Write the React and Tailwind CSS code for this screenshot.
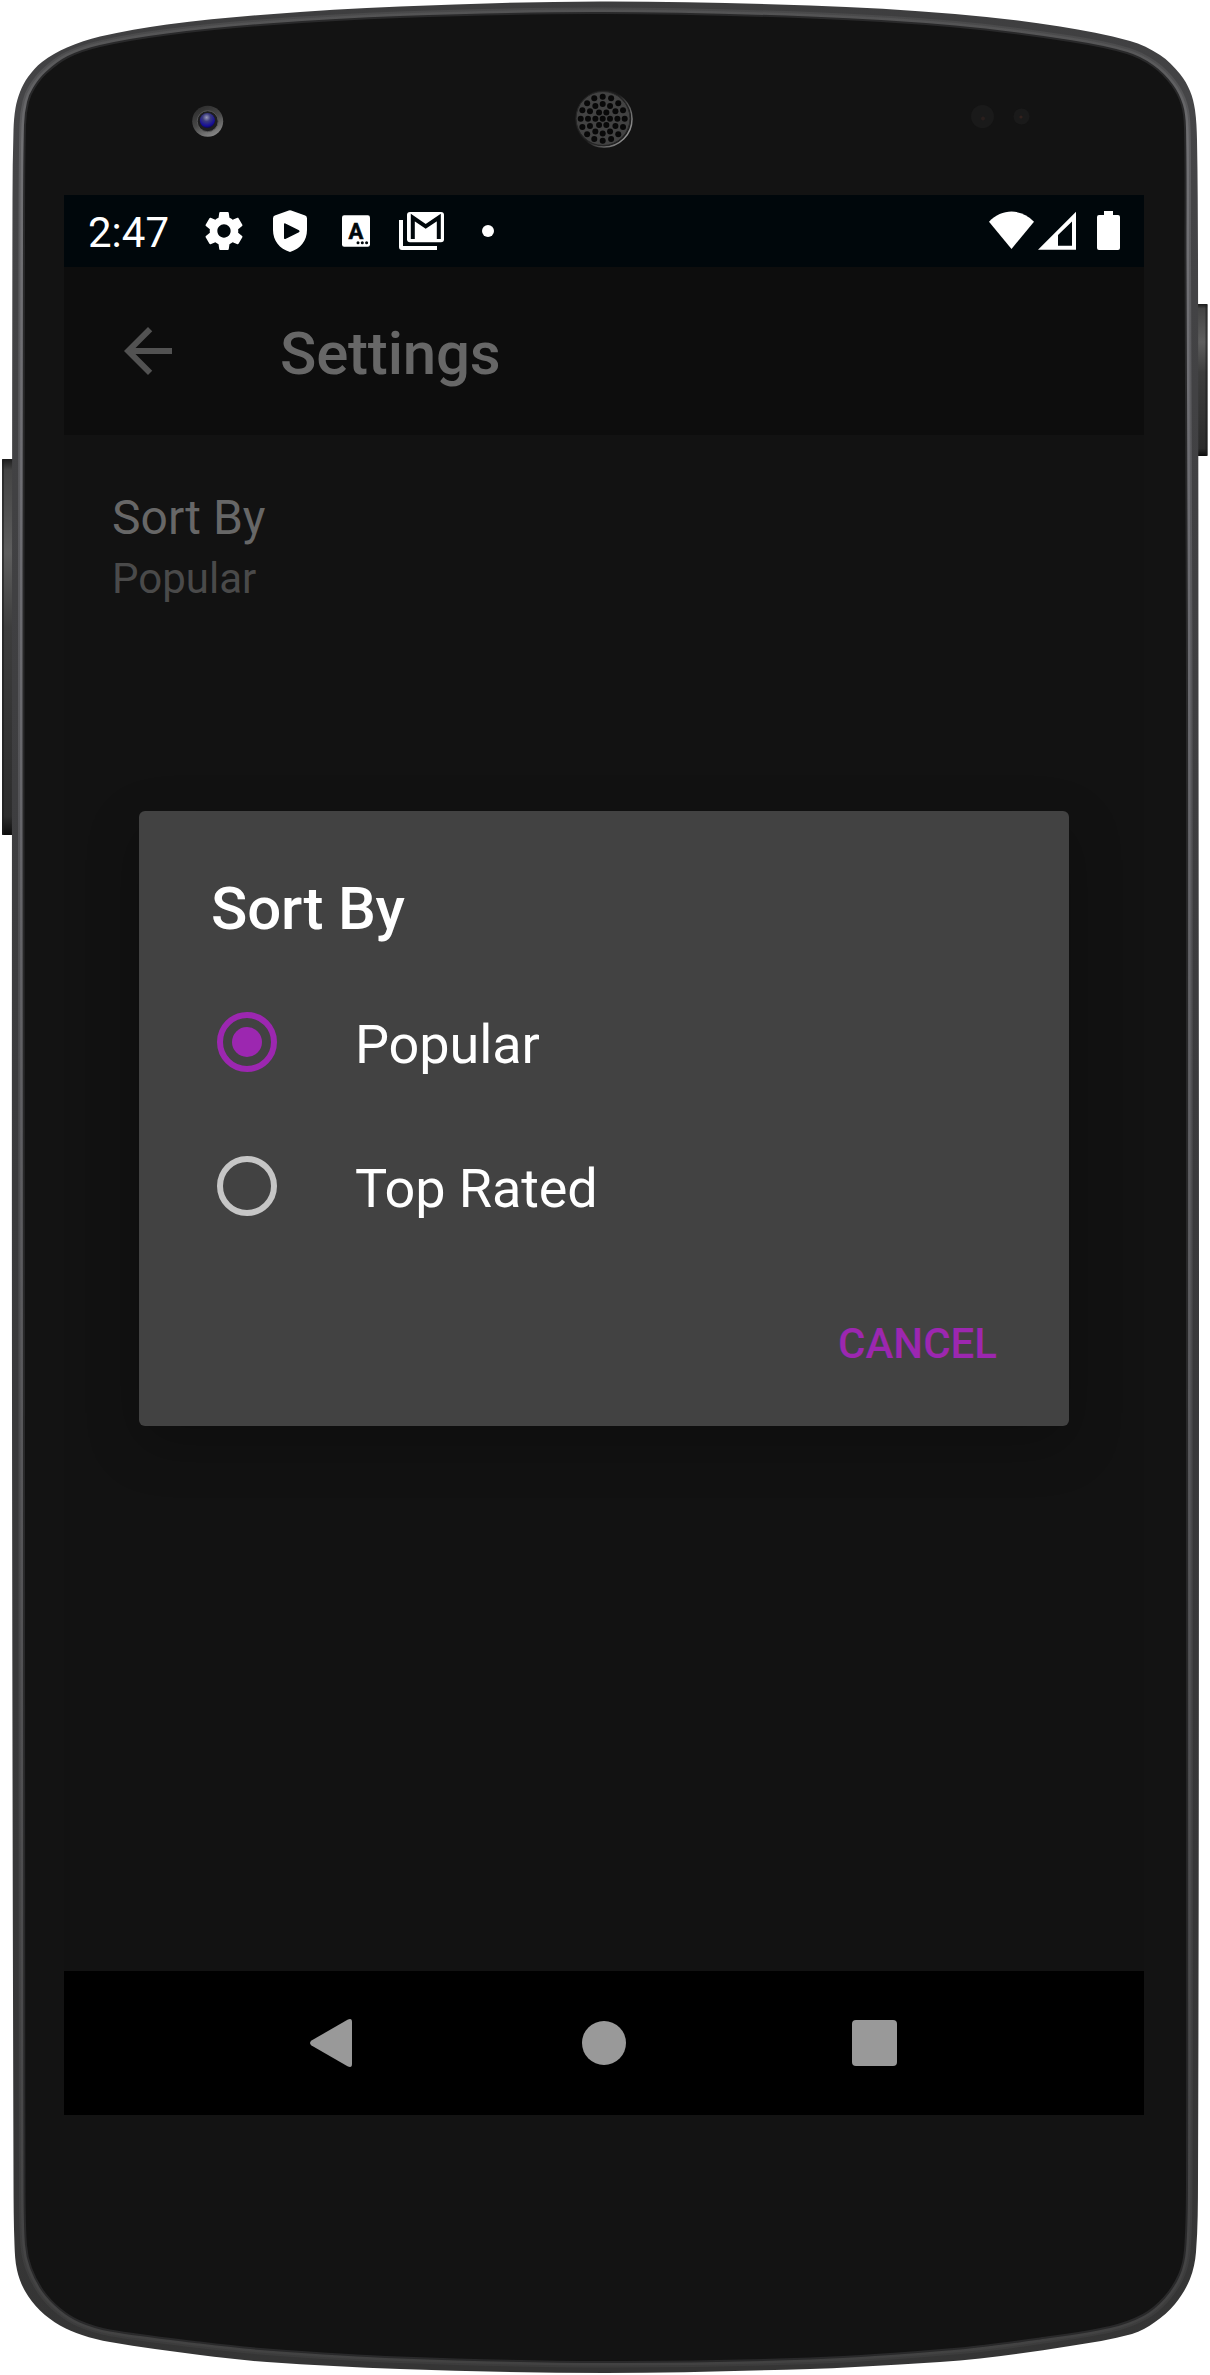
import React from "react";

const OUTER = [
  [600, 1.5], [810, 5.5], [955, 14], [1060, 26.5], [1130, 41], [1160, 55], [1180, 74], [1190, 91], [1195, 110], [1197, 140],
  [1198, 260], [1198.5, 700], [1199, 1400], [1198, 2180], [1196, 2252], [1190, 2279], [1175, 2304], [1155, 2322], [1132, 2334],
  [1070, 2346], [980, 2358.5], [900, 2364.5], [810, 2369], [605, 2373], [400, 2369], [267, 2362], [200, 2355], [110, 2342],
  [82, 2335], [60, 2325.5], [40, 2310.5], [25, 2291], [17, 2270], [14.5, 2245], [13.5, 2180], [12, 1400], [12, 700], [12.5, 200],
  [13.5, 130], [15.5, 108], [20, 92], [28, 77], [42, 62], [67, 47.5], [100, 36.5], [167, 24.5], [267, 14.5], [400, 6.5],
];

const INNER = [
  [600, 13], [810, 17.5], [955, 26.5], [1070, 41], [1127, 53], [1153, 66], [1172, 85], [1182, 105], [1185, 128], [1185.5, 260],
  [1187, 700], [1187, 1400], [1187, 2180], [1185, 2250], [1179, 2275], [1164, 2298], [1143, 2315], [1110, 2327], [1040, 2338.5],
  [960, 2348.5], [810, 2358.5], [605, 2362], [400, 2357.5], [267, 2349.5], [200, 2342.5], [110, 2330.5], [80, 2321.5],
  [60, 2309], [43, 2291], [31, 2268], [26, 2245], [24.5, 2180], [24, 1400], [23.5, 700], [24, 250], [25, 125], [28, 102],
  [34, 88], [46, 73], [68, 57], [100, 46], [167, 34.5], [267, 24.5], [400, 17],
];

// Closed Catmull-Rom spline through a list of points.
function spline(points) {
  const n = points.length;
  let d = `M${points[0][0]} ${points[0][1]}`;
  for (let i = 0; i < n; i++) {
    const [a, b, c, e] = [-1, 0, 1, 2].map((k) => points[(i + k + n) % n]);
    const len = Math.hypot(c[0] - b[0], c[1] - b[1]);
    const t1 = Math.hypot(c[0] - a[0], c[1] - a[1]) || 1;
    const t2 = Math.hypot(e[0] - b[0], e[1] - b[1]) || 1;
    const k = len / 3;
    d += `C${b[0] + ((c[0] - a[0]) / t1) * k} ${b[1] + ((c[1] - a[1]) / t1) * k} ${c[0] - ((e[0] - b[0]) / t2) * k} ${
      c[1] - ((e[1] - b[1]) / t2) * k
    } ${c[0]} ${c[1]}`;
  }
  return d + "Z";
}

function speakerHoles() {
  const holes = [[0, 0]];
  for (const [count, radius] of [[6, 7.3], [12, 14.7], [16, 22]]) {
    for (let i = 0; i < count; i++) {
      const a = (i / count) * Math.PI * 2;
      holes.push([Math.cos(a) * radius, Math.sin(a) * radius]);
    }
  }
  return holes;
}

function PhoneBody() {
  const inner = spline(INNER);
  return (
    <svg className="absolute inset-0" width="1210" height="2375" viewBox="0 0 1210 2375" aria-hidden="true">
      <defs>
        <linearGradient id="rim" x1="0" y1="0" x2="0" y2="1">
          <stop offset="0" stopColor="#3d3d3e" />
          <stop offset="0.04" stopColor="#454547" />
          <stop offset="0.5" stopColor="#3a3a3c" />
          <stop offset="1" stopColor="#353535" />
        </linearGradient>
        <linearGradient id="shine" gradientUnits="userSpaceOnUse" x1="0" y1="0" x2="0" y2="2375">
          <stop offset="0" stopColor="#525253" />
          <stop offset="0.02" stopColor="#565657" />
          <stop offset="0.06" stopColor="#707073" />
          <stop offset="0.2" stopColor="#6e6e73" />
          <stop offset="0.6" stopColor="#58585b" />
          <stop offset="0.92" stopColor="#464647" />
          <stop offset="1" stopColor="#424242" />
        </linearGradient>
        <linearGradient id="key" x1="0" y1="0" x2="0" y2="1">
          <stop offset="0" stopColor="#1c1c1c" />
          <stop offset="0.03" stopColor="#444444" />
          <stop offset="0.25" stopColor="#5e5e5e" />
          <stop offset="0.45" stopColor="#3d3d3d" />
          <stop offset="0.95" stopColor="#2c2c2c" />
          <stop offset="1" stopColor="#0c0c0c" />
        </linearGradient>
        <linearGradient id="lens" x1="0.2" y1="0" x2="0.7" y2="1">
          <stop offset="0" stopColor="#2b2b2b" />
          <stop offset="0.5" stopColor="#484848" />
          <stop offset="1" stopColor="#8a8a8a" />
        </linearGradient>
        <radialGradient id="pupil" cx="0.45" cy="0.3" r="0.75">
          <stop offset="0" stopColor="#9a9ab8" />
          <stop offset="0.35" stopColor="#3b3b7c" />
          <stop offset="0.75" stopColor="#160e98" />
          <stop offset="1" stopColor="#0b0830" />
        </radialGradient>
        <linearGradient id="speakerEdge" x1="0.2" y1="0.2" x2="1" y2="0.75">
          <stop offset="0.4" stopColor="#1b1b1b" />
          <stop offset="1" stopColor="#9a9a9a" />
        </linearGradient>
      </defs>
      <rect x="2" y="459" width="12" height="376" rx="1" fill="url(#key)" />
      <rect x="2" y="459" width="2" height="376" fill="#1d1d1d" opacity="0.6" />
      <rect x="1196" y="304" width="11.5" height="152" rx="1" fill="url(#key)" />
      <rect x="1205.5" y="304" width="2" height="152" fill="#1d1d1d" opacity="0.6" />
      <path d={spline(OUTER)} fill="url(#rim)" />
      <path d={inner} fill="none" stroke="url(#shine)" strokeWidth="11" opacity="0.55" />
      <path d={inner} fill="none" stroke="url(#shine)" strokeWidth="7" />
      <path d={inner} fill="#131313" stroke="#29292a" strokeWidth="2" />

      <circle cx="207.7" cy="121.2" r="15.5" fill="url(#lens)" />
      <circle cx="207.7" cy="121.2" r="10.5" fill="#1d1d1f" stroke="#565656" />
      <circle cx="207.4" cy="120.5" r="7.5" fill="url(#pupil)" />

      <circle cx="604" cy="119" r="28" fill="#1a1a1a" stroke="url(#speakerEdge)" strokeWidth="1.5" />
      <circle cx="603" cy="118.5" r="27" fill="#424242" stroke="#262626" />
      {speakerHoles().map(([x, y], i) => (
        <circle key={i} cx={602.7 + x} cy={118.7 + y} r="3" fill="#080808" />
      ))}

      <circle cx="982.5" cy="116.5" r="11.5" fill="#1a1a1a" />
      <circle cx="983" cy="118.5" r="2" fill="#2a1f1d" />
      <circle cx="1021.5" cy="116.5" r="8" fill="#1a1a1a" />
      <circle cx="1021" cy="117" r="1.6" fill="#33211d" />
    </svg>
  );
}

// Glyph for the status bar: x is the horizontal origin inside the device, height is always the bar's.
function StatusIcon({ x, w, className = "", children }) {
  return (
    <svg className={`shrink-0 ${className}`} width={w} height="72" viewBox={`${x} 195 ${w} 72`} fill="#fff" aria-hidden="true">
      {children}
    </svg>
  );
}

function StatusBar() {
  return (
    <div className="flex h-[72px] items-center bg-[#00070b] pr-6 pl-6 text-white">
      <span className="w-[117px] pt-[3px] text-[42px] leading-[49px]">2:47</span>
      <StatusIcon x={204} w={40} className="-ml-px">
        <g transform="translate(201.2 208.2) scale(1.9)">
          <path d="M19.43 12.98c.04-.32.07-.64.07-.98s-.03-.66-.07-.98l2.11-1.65c.19-.15.24-.42.12-.64l-2-3.46c-.12-.22-.39-.3-.61-.22l-2.49 1c-.52-.4-1.08-.73-1.69-.98l-.38-2.65C14.46 2.18 14.25 2 14 2h-4c-.25 0-.46.18-.49.42l-.38 2.65c-.61.25-1.17.59-1.69.98l-2.49-1c-.23-.09-.49 0-.61.22l-2 3.46c-.13.22-.07.49.12.64l2.11 1.65c-.04.32-.07.65-.07.98s.03.66.07.98l-2.11 1.65c-.19.15-.24.42-.12.64l2 3.46c.12.22.39.3.61.22l2.49-1c.52.4 1.08.73 1.69.98l.38 2.65c.03.24.24.42.49.42h4c.25 0 .46-.18.49-.42l.38-2.65c.61-.25 1.17-.59 1.69-.98l2.49 1c.23.09.49 0 .61-.22l2-3.46c.12-.22.07-.49-.12-.64l-2.11-1.65zM12 15.5c-1.93 0-3.5-1.57-3.5-3.5s1.57-3.5 3.5-3.5 3.5 1.57 3.5 3.5-1.57 3.5-3.5 3.5z" />
        </g>
      </StatusIcon>
      <StatusIcon x={273} w={34} className="ml-[29px]">
        <path
          fillRule="evenodd"
          d="M288.8 210.5Q290 210 291.2 210.5L305.2 215.6Q307 216.4 307 218.4V230C307 240.5 300.5 249 290 252C279.500 249 273 240.500 273 230V218.400Q273 216.400 274.800 215.600ZM284 224.300V238.100Q284 239.600 285.400 238.900L299 232.200Q300.300 231.200 299 230.300L285.400 223.500Q284 223 284 224.300Z"
        />
      </StatusIcon>
      <StatusIcon x={342} w={28} className="ml-[35px]">
        <rect x="342" y="215.300" width="28" height="31.500" rx="2.200" />
        <text x="356" y="238.500" textAnchor="middle" fontFamily="Roboto, sans-serif" fontWeight="700" fontSize="22" fill="#00070b" stroke="#00070b" strokeWidth="0.6">A</text>
        <circle cx="358" cy="242.700" r="1.500" fill="#00070b" />
        <circle cx="362.300" cy="242.700" r="1.500" fill="#00070b" />
        <circle cx="366.600" cy="242.700" r="1.500" fill="#00070b" />
      </StatusIcon>
      <StatusIcon x={399} w={45} className="ml-[29px]">
        <path d="M399 220h4v26h34v4h-35q-3 0-3-3z" />
        <rect x="407" y="212" width="37" height="30.300" rx="3" />
        <path d="M412.800 239V217.500L425.700 226.400L438.800 217.500V239" fill="none" stroke="#00070b" strokeWidth="4" />
      </StatusIcon>
      <StatusIcon x={482} w={12} className="ml-[38px]">
        <circle cx="488" cy="231" r="6" />
      </StatusIcon>
      <StatusIcon x={989} w={45} className="ml-auto">
        <path d="M989 221.700C1002 208.200 1021 208.200 1034 221.700L1011.500 249Z" />
      </StatusIcon>
      <StatusIcon x={1038} w={38} className="ml-1">
        <path fillRule="evenodd" d="M1038 249.700L1076 211.700V249.700ZM1058 245.700H1072V221.500L1058 235Z" />
      </StatusIcon>
      <StatusIcon x={1097} w={23} className="ml-[21px]">
        <path d="M1104 211h9v4h5q2 0 2 2v31q0 2-2 2h-19q-2 0-2-2v-31q0-2 2-2h5z" />
      </StatusIcon>
    </div>
  );
}

function AppBar() {
  return (
    <header className="flex h-[168px] items-center bg-[#0d0d0d] pl-12">
      <svg className="size-[72px]" viewBox="0 0 24 24" fill="#525252" aria-label="Back">
        <path d="M20 11H7.830l5.590-5.590L12 4l-8 8 8 8 1.410-1.410L7.830 13H20v-2z" />
      </svg>
      <h1 className="ml-24 pt-[5px] text-[60px] leading-[71px] font-medium tracking-[-0.2px] text-[#676767]">Settings</h1>
    </header>
  );
}

function RadioRow({ label, checked }) {
  return (
    <div className="flex h-36 items-center pl-[78px]">
      <svg className="size-[60px]" viewBox="0 0 60 60" aria-hidden="true">
        <circle cx="30" cy="30" r="27" fill="none" stroke={checked ? "#9c27b0" : "#c6c6c6"} strokeWidth="6" />
        {checked && <circle cx="30" cy="30" r="15" fill="#9c27b0" />}
      </svg>
      <span className="ml-[78px] pt-[5px] text-[54px] leading-[63px] tracking-[-0.1px] text-white">{label}</span>
    </div>
  );
}

function SortDialog() {
  return (
    <div className="absolute inset-x-0 top-[72px] bottom-[145px] flex items-center justify-center">
      <div className="h-[615px] w-[930px] rounded-md bg-[#424242] shadow-[0_18px_54px_rgba(0,0,0,0.24)]" role="dialog">
        <h2 className="h-[159px] pt-[62px] pl-[72px] text-[60px] leading-[71px] font-medium tracking-[-0.2px] text-white">Sort By</h2>
        <RadioRow label="Popular" checked />
        <RadioRow label="Top Rated" />
        <div className="flex justify-end pt-[61px] pr-[72px]">
          <button className="text-[42px] leading-[49px] font-medium text-[#9c27b0]">CANCEL</button>
        </div>
      </div>
    </div>
  );
}

function NavBar() {
  return (
    <nav className="flex h-36 items-center bg-black pl-[234px]">
      <svg className="h-12 w-[72px] shrink-0" viewBox="298 2019 72 48" fill="#999" aria-label="Back">
        <path d="M311.500 2040.500L347.500 2019.800Q352 2017.600 352 2022V2064Q352 2068.400 347.500 2066.200L311.500 2045.500Q308.500 2043 311.500 2040.500Z" />
      </svg>
      <div className="ml-[212px] size-11 rounded-full bg-[#999]" />
      <div className="ml-[226px] h-[46px] w-[45px] rounded bg-[#999]" />
    </nav>
  );
}

export default function App() {
  return (
    <div className="relative h-[2375px] w-[1210px] overflow-hidden bg-white pt-[195px] pl-16 font-['Roboto',sans-serif]">
      <PhoneBody />
      <div className="relative flex h-[1920px] w-[1080px] flex-col bg-[#121212]">
        <StatusBar />
        <AppBar />
        <main className="flex-1 px-12 pt-[54px]">
          <p className="text-[48px] leading-[57px] text-[#676767]">Sort By</p>
          <p className="mt-2 text-[42px] leading-[49px] text-[#4a4a4a]">Popular</p>
        </main>
        <NavBar />
        <SortDialog />
      </div>
    </div>
  );
}
